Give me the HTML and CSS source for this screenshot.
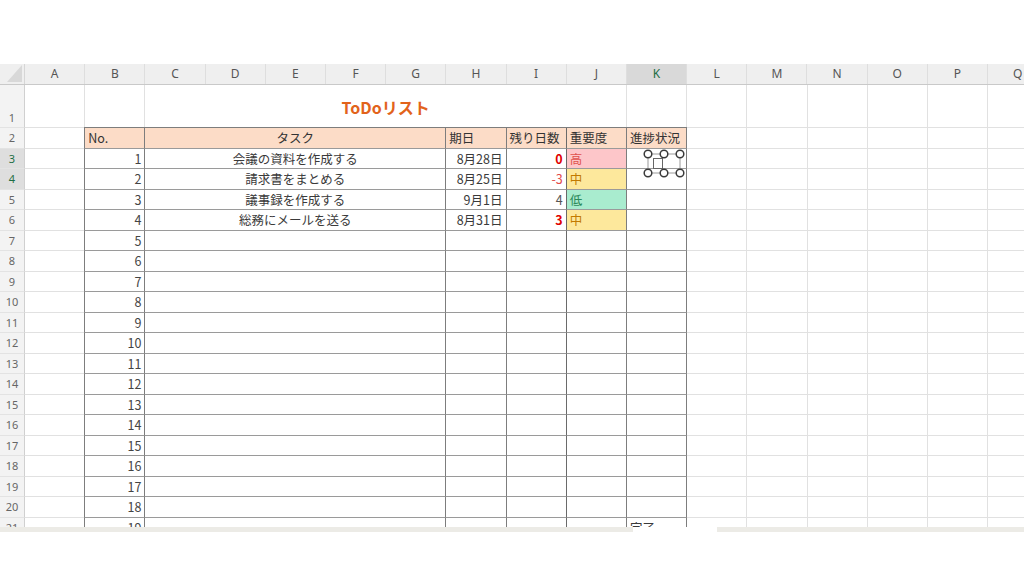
FILE: index.html
```html
<!DOCTYPE html>
<html lang="ja">
<head>
<meta charset="utf-8">
<title>ToDoリスト</title>
<link rel="stylesheet" href="styles.css">
</head>
<body>
<div class="sheet">
  <div class="colhead">
    <div class="corner"><div class="tri"></div></div>
    <div class="col">A</div><div class="col">B</div><div class="col">C</div><div class="col">D</div>
    <div class="col">E</div><div class="col">F</div><div class="col">G</div><div class="col">H</div>
    <div class="col">I</div><div class="col">J</div><div class="col sel">K</div><div class="col">L</div>
    <div class="col">M</div><div class="col">N</div><div class="col">O</div><div class="col">P</div>
    <div class="col">Q</div>
  </div>

  <div class="row r1"><div class="rh">1</div><div class="cells">
    <div class="title">ToDoリスト</div>
  </div></div>

  <div class="row"><div class="rh">2</div><div class="cells">
    <div class="t hd b">No.</div><div class="t hd task">タスク</div><div class="t hd h">期日</div><div class="t hd i">残り日数</div><div class="t hd j">重要度</div><div class="t hd k">進捗状況</div>
  </div></div>

  <div class="row"><div class="rh sel">3</div><div class="cells">
    <div class="t b">1</div><div class="t task">会議の資料を作成する</div><div class="t h">8月28日</div><div class="t i due">0</div><div class="t j hi">高</div>
    <div class="t k obj"><svg class="chk" width="46" height="33" viewBox="0 0 46 33"><rect x="7" y="7" width="32" height="19" fill="none" stroke="#9a9a9a" stroke-width="1"/><rect x="12.5" y="11.5" width="9" height="10" fill="none" stroke="#666" stroke-width="1"/><g fill="#fff" stroke="#3a3a3a" stroke-width="1.5"><circle cx="7" cy="7" r="3.8"/><circle cx="23" cy="7" r="3.8"/><circle cx="39" cy="7" r="3.8"/><circle cx="7" cy="26" r="3.8"/><circle cx="23" cy="26" r="3.8"/><circle cx="39" cy="26" r="3.8"/></g></svg></div>
  </div></div>

  <div class="row"><div class="rh sel">4</div><div class="cells">
    <div class="t b">2</div><div class="t task">請求書をまとめる</div><div class="t h">8月25日</div><div class="t i over">-3</div><div class="t j mid">中</div><div class="t k"></div>
  </div></div>

  <div class="row"><div class="rh">5</div><div class="cells">
    <div class="t b">3</div><div class="t task">議事録を作成する</div><div class="t h">9月1日</div><div class="t i ok">4</div><div class="t j lo">低</div><div class="t k"></div>
  </div></div>

  <div class="row"><div class="rh">6</div><div class="cells">
    <div class="t b">4</div><div class="t task">総務にメールを送る</div><div class="t h">8月31日</div><div class="t i due">3</div><div class="t j mid">中</div><div class="t k"></div>
  </div></div>

  <div class="row"><div class="rh">7</div><div class="cells"><div class="t b">5</div><div class="t task"></div><div class="t h"></div><div class="t i"></div><div class="t j"></div><div class="t k"></div></div></div>
  <div class="row"><div class="rh">8</div><div class="cells"><div class="t b">6</div><div class="t task"></div><div class="t h"></div><div class="t i"></div><div class="t j"></div><div class="t k"></div></div></div>
  <div class="row"><div class="rh">9</div><div class="cells"><div class="t b">7</div><div class="t task"></div><div class="t h"></div><div class="t i"></div><div class="t j"></div><div class="t k"></div></div></div>
  <div class="row"><div class="rh">10</div><div class="cells"><div class="t b">8</div><div class="t task"></div><div class="t h"></div><div class="t i"></div><div class="t j"></div><div class="t k"></div></div></div>
  <div class="row"><div class="rh">11</div><div class="cells"><div class="t b">9</div><div class="t task"></div><div class="t h"></div><div class="t i"></div><div class="t j"></div><div class="t k"></div></div></div>
  <div class="row"><div class="rh">12</div><div class="cells"><div class="t b">10</div><div class="t task"></div><div class="t h"></div><div class="t i"></div><div class="t j"></div><div class="t k"></div></div></div>
  <div class="row"><div class="rh">13</div><div class="cells"><div class="t b">11</div><div class="t task"></div><div class="t h"></div><div class="t i"></div><div class="t j"></div><div class="t k"></div></div></div>
  <div class="row"><div class="rh">14</div><div class="cells"><div class="t b">12</div><div class="t task"></div><div class="t h"></div><div class="t i"></div><div class="t j"></div><div class="t k"></div></div></div>
  <div class="row"><div class="rh">15</div><div class="cells"><div class="t b">13</div><div class="t task"></div><div class="t h"></div><div class="t i"></div><div class="t j"></div><div class="t k"></div></div></div>
  <div class="row"><div class="rh">16</div><div class="cells"><div class="t b">14</div><div class="t task"></div><div class="t h"></div><div class="t i"></div><div class="t j"></div><div class="t k"></div></div></div>
  <div class="row"><div class="rh">17</div><div class="cells"><div class="t b">15</div><div class="t task"></div><div class="t h"></div><div class="t i"></div><div class="t j"></div><div class="t k"></div></div></div>
  <div class="row"><div class="rh">18</div><div class="cells"><div class="t b">16</div><div class="t task"></div><div class="t h"></div><div class="t i"></div><div class="t j"></div><div class="t k"></div></div></div>
  <div class="row"><div class="rh">19</div><div class="cells"><div class="t b">17</div><div class="t task"></div><div class="t h"></div><div class="t i"></div><div class="t j"></div><div class="t k"></div></div></div>
  <div class="row"><div class="rh">20</div><div class="cells"><div class="t b">18</div><div class="t task"></div><div class="t h"></div><div class="t i"></div><div class="t j"></div><div class="t k"></div></div></div>
  <div class="row"><div class="rh">21</div><div class="cells"><div class="t b">19</div><div class="t task"></div><div class="t h"></div><div class="t i"></div><div class="t j"></div><div class="t k">完了</div></div></div>
</div>
<div class="hbar"><div class="seg seg1"></div><div class="seg seg2"></div></div>
</body>
</html>
```

FILE: styles.css
```css
* { box-sizing: border-box; }
html, body { margin: 0; padding: 0; background: #fff; overflow: hidden; }
body { font-family: "Noto Sans CJK JP", "Noto Sans", sans-serif; }

.sheet { margin-top: 64px; height: 463px; overflow: hidden; width: 1024px; }

.colhead { display: flex; height: 21px; background: #efefef; border-bottom: 1px solid #c9c9c9; width: max-content; }
.corner { width: 25px; flex: none; display: flex; justify-content: flex-end; align-items: flex-end; padding: 0 2px 2px 0; border-right: 1px solid #d6d6d6; }
.tri { width: 15px; height: 17px; background: #d8d8d8; clip-path: polygon(100% 0, 100% 100%, 0 100%); }
.col { width: 60.2px; flex: none; text-align: center; font: 12px/20px "Noto Sans", sans-serif; color: #555; border-right: 1px solid #dedede; }
.col.sel { background: #d9d9d9; color: #1e6e45; }

.row { display: flex; height: 20.5px; width: max-content; }
.row.r1 { height: 43px; }
.rh { width: 25px; flex: none; background: #f3f3f3; border-right: 1px solid #d0d0d0; border-bottom: 1px solid #e3e3e3; font: 11px "Noto Sans", sans-serif; color: #666; display: flex; align-items: center; justify-content: center; }
.r1 .rh { align-items: flex-end; padding-bottom: 2px; }
.rh.sel { background: #dedede; color: #1e6e45; }

.cells {
  flex: none;
  width: 1023.4px;
  display: grid;
  grid-template-columns: repeat(17, 60.2px);
  background:
    repeating-linear-gradient(to right, transparent 0 59.2px, #e1e1e1 59.2px 60.2px),
    linear-gradient(to top, #e1e1e1 0 1px, transparent 1px);
}

.title { grid-column: 3 / 11; background: #fff; margin: 0 1px 1px 0; display: flex; align-items: center; justify-content: center; font-weight: 700; font-size: 16px; color: #e2631b; padding-top: 1px; }

.t { background: #fff; border-right: 1px solid #7d7d7d; border-bottom: 1px solid #9a9a9a; font-size: 12.5px; color: #3a3a3a; line-height: 19px; padding: 0 3px; white-space: nowrap; overflow: hidden; }
.b { grid-column: 2; margin-left: -1px; border-left: 1px solid #7d7d7d; text-align: right; color: #444; }
.task { grid-column: 3 / 8; text-align: center; }
.h { grid-column: 8; text-align: right; }
.i { grid-column: 9; text-align: right; }
.j { grid-column: 10; border-left: 1px solid #6a6a6a; margin-left: -1px; }
.k { grid-column: 11; }

.hd { background: #fcdcc7; box-shadow: 0 -1px 0 #7d7d7d; text-align: left; color: #333; }
.hd.task { text-align: center; }

.due { color: #e00000; font-weight: 700; }
.over { color: #e24a4a; }
.ok { color: #555; }

.hi { background: #fdc6c9; color: #e0524d; }
.mid { background: #fde89c; color: #c27a00; }
.lo { background: #a9eccf; color: #2d8a5a; }

.obj { position: relative; z-index: 2; overflow: visible; }
.chk { position: absolute; left: 14px; top: -2px; }

.hbar { display: flex; height: 5px; }
.seg { background: #ecebe6; }
.seg1 { width: 633px; }
.seg2 { margin-left: 84px; flex: 1; }
```
